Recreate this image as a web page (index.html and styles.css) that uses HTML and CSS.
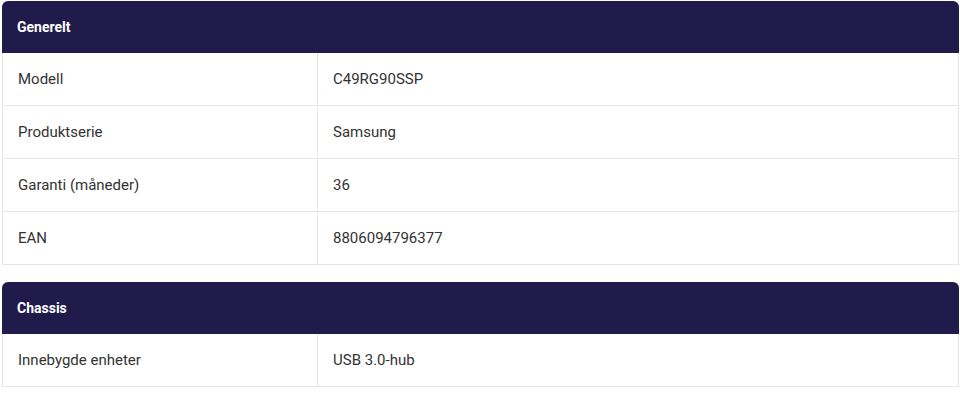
FILE: index.html
```html
<!doctype html>
<html lang="no">
<head>
    <meta charset="UTF-8">
    <title>Spesifikasjoner</title>
    <link rel="stylesheet" href="styles.css">
</head>
<body>
<div class="wrapper">
    <div class="spec-group">
        <div class="spec-title">Generelt</div>
        <table class="spec-table">
            <tr>
                <td class="spec-name">Modell</td>
                <td class="spec-value">C49RG90SSP</td>
            </tr>
            <tr>
                <td class="spec-name">Produktserie</td>
                <td class="spec-value">Samsung</td>
            </tr>
            <tr>
                <td class="spec-name">Garanti (måneder)</td>
                <td class="spec-value">36</td>
            </tr>
            <tr>
                <td class="spec-name">EAN</td>
                <td class="spec-value">8806094796377</td>
            </tr>
        </table>
    </div>
    <div class="spec-group">
        <div class="spec-title">Chassis</div>
        <table class="spec-table">
            <tr>
                <td class="spec-name">Innebygde enheter</td>
                <td class="spec-value">USB 3.0-hub</td>
            </tr>
        </table>
    </div>
</div>
</body>
</html>
```

FILE: styles.css
```css
body {
    margin: 0;
    background: #fff;
    font-family: Roboto, "Liberation Sans", sans-serif;
    font-size: 15px;
    color: #333;
}

.wrapper {
    padding: 1px 1px 0 2px;
}

.spec-group {
    margin-bottom: 17px;
}

.spec-title {
    height: 52px;
    display: flex;
    align-items: center;
    padding-left: 15px;
    background: #201b4b;
    color: #fff;
    font-size: 14px;
    font-weight: 700;
    border-radius: 6px 6px 0 0;
}

.spec-table {
    width: 100%;
    border-collapse: collapse;
    border: 1px solid #e6e6e6;
    border-top: none;
}

.spec-table td {
    height: 52px;
    padding: 0 15px;
    border-bottom: 1px solid #e6e6e6;
    vertical-align: middle;
}

.spec-name {
    width: 284px;
    border-right: 1px solid #e6e6e6;
}
```
